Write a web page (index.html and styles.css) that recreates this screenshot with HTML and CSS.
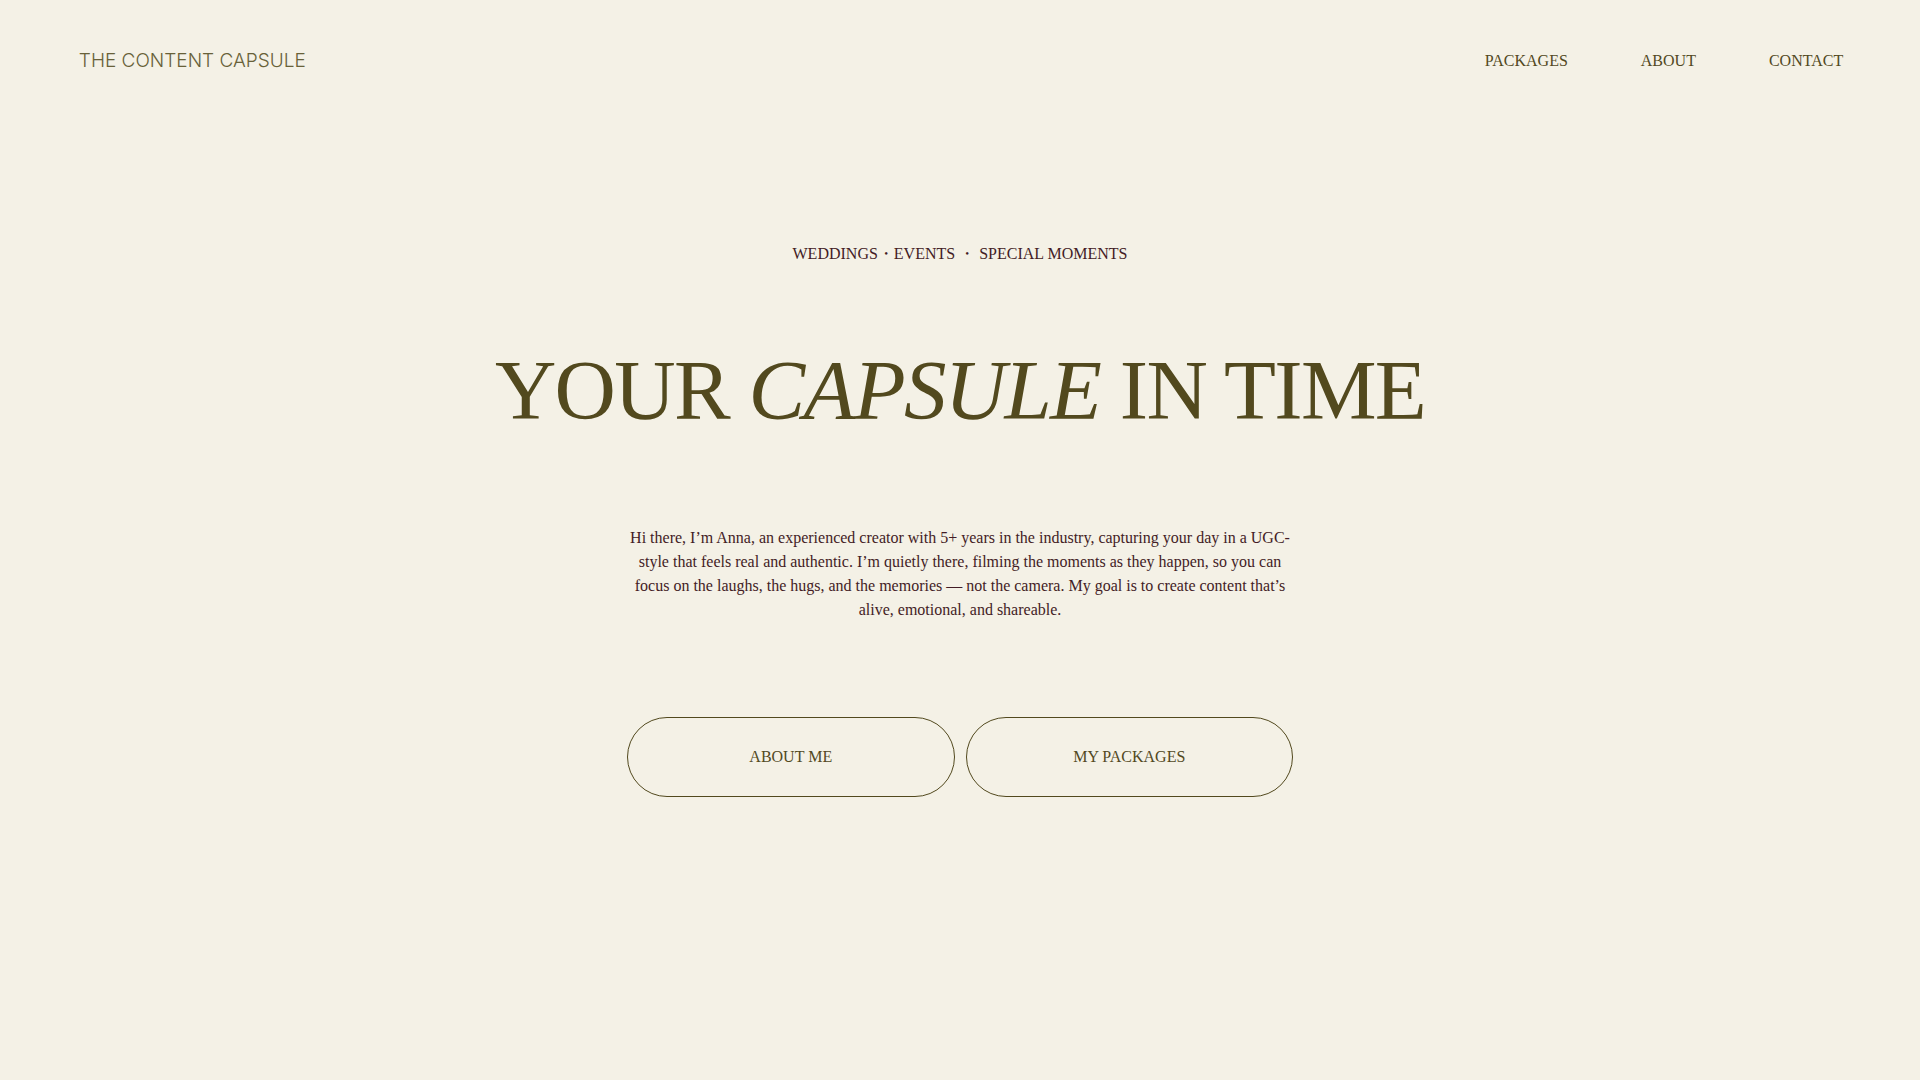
FILE: index.html
```html
<!DOCTYPE html>
<html lang="en">
<head>
    <meta charset="UTF-8">
    <meta name="viewport" content="width=device-width, initial-scale=1.0">
    <title>The Content Capsule</title>
    <link rel="stylesheet" href="styles.css">
</head>
<body>
    <header class="header">
        <a class="logo" href="#home">THE CONTENT CAPSULE</a>
        <nav class="nav">
            <a href="#packages">PACKAGES</a>
            <a href="#about">ABOUT</a>
            <a href="#contact">CONTACT</a>
        </nav>
    </header>

    <main class="hero" id="home">
        <p class="tagline">WEDDINGS・EVENTS ・ SPECIAL MOMENTS</p>
        <h1>YOUR <em>CAPSULE</em> IN TIME</h1>
        <p class="intro">Hi there, I’m Anna, an experienced creator with 5+ years in the industry, capturing your day in a UGC-style that feels real and authentic. I’m quietly there, filming the moments as they happen, so you can focus on the laughs, the hugs, and the memories — not the camera. My goal is to create content that’s alive, emotional, and shareable.</p>
        <div class="buttons">
            <a class="btn" href="#about">ABOUT ME</a>
            <a class="btn" href="#packages">MY PACKAGES</a>
        </div>
    </main>
</body>
</html>
```
FILE: styles.css
```css
* {
    box-sizing: border-box;
    margin: 0;
    padding: 0;
}

body {
    background-color: #f4f1e6;
    color: #431c25;
    font-family: "Liberation Serif", "Times New Roman", serif;
    font-size: 16px;
    line-height: 24px;
}

a {
    color: #52491e;
    text-decoration: none;
}

.header {
    display: flex;
    justify-content: space-between;
    align-items: center;
    padding: 49px 4% 48px;
}

.logo {
    font-family: Inter, sans-serif;
    font-size: 19px;
    font-weight: 300;
    color: #686139;
    padding-left: 2px;
}

.nav {
    display: flex;
    gap: 73px;
}

.nav a:hover {
    text-decoration: underline;
}

.hero {
    display: flex;
    flex-direction: column;
    align-items: center;
    padding: 121px 24px;
    text-align: center;
}

h1 {
    margin: 60px 0 72px;
    color: #52491e;
    font-size: 85px;
    font-weight: 400;
    line-height: 128px;
    letter-spacing: -0.02em;
}

.intro {
    max-width: 666px;
}

.buttons {
    display: flex;
    gap: 11px;
    width: 100%;
    max-width: 666px;
    margin-top: 95px;
}

.btn {
    flex: 1;
    padding: 27px 24px;
    border: 1px solid #52491e;
    border-radius: 40px;
}

.btn:hover {
    background-color: #52491e;
    color: #f4f1e6;
}
```
